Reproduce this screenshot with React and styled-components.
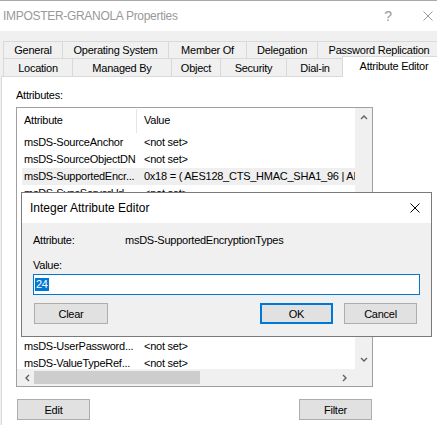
import React from "react"
import styled, { createGlobalStyle } from "styled-components"

const Global = createGlobalStyle`
  * { box-sizing: border-box; }
  body {
    margin: 0;
    font-family: "Liberation Sans", Arial, sans-serif;
    font-size: 11px;
    letter-spacing: -0.25px;
    color: #000;
    background: #fff;
  }
`

const topTabs = [
  { label: "General", width: 60 },
  { label: "Operating System", width: 107 },
  { label: "Member Of", width: 79 },
  { label: "Delegation", width: 72 },
  { label: "Password Replication", width: 124 },
]

const bottomTabs = [
  { label: "Location", width: 70 },
  { label: "Managed By", width: 100 },
  { label: "Object", width: 50 },
  { label: "Security", width: 67 },
  { label: "Dial-in", width: 58 },
  { label: "Attribute Editor", width: 104, active: true },
]

const rows = [
  ["msDS-SourceAnchor", "<not set>"],
  ["msDS-SourceObjectDN", "<not set>"],
  ["msDS-SupportedEncr...", "0x18 = ( AES128_CTS_HMAC_SHA1_96 | AES256_CTS_HMAC_SHA1_96 )", true],
  ["msDS-SyncServerUrl", "<not set>"],
  ["msDS-TasksForAzRole", "<not set>"],
  ["msDS-TDOEgressBL", "<not set>"],
  ["msDS-TDOIngressBL", "<not set>"],
  ["msDS-TopQuotaUsage", "<not set>"],
  ["msDS-UpdateScript", "<not set>"],
  ["msDS-User-Account...", "0x1000 = ( WORKSTATION_TRUST_ACCOUNT )"],
  ["msDS-UserPasswordE...", "<not set>"],
  ["msDS-UserAccountDi...", "<not set>"],
  ["msDS-UserPassword...", "<not set>"],
  ["msDS-ValueTypeRef...", "<not set>"],
]

const Window = styled.div`
  position: relative;
  width: 437px;
  height: 425px;
  overflow: hidden;
  background: #f0f0f0;
  display: flex;
  flex-direction: column;
`

const TitleBar = styled.div`
  height: 31px;
  flex: none;
  background: #fff;
  border-top: 1px solid #aaa;
  display: flex;
  align-items: center;
  padding-left: 3px;
  color: #999;
  font-size: 12px;
  letter-spacing: -0.3px;
`

const TitleText = styled.div`
  flex: 1;
`

const CaptionButtons = styled.div`
  display: flex;
  margin-right: -8px;
`

const CaptionButton = styled.div`
  width: ${p => p.$w}px;
  height: 30px;
  display: flex;
  align-items: center;
  justify-content: center;
  font-size: 14px;
  color: #999;
`

const TabStrip = styled.div`
  padding: 10px 0 0 3px;
  flex: none;
`

const TabRow = styled.div`
  display: flex;
  align-items: flex-end;
  height: ${p => p.$h}px;
`

const Tab = styled.div`
  flex: none;
  width: ${p => p.$w}px;
  height: ${p => (p.$active ? p.$h + 3 : p.$h)}px;
  margin-left: ${p => (p.$active ? -2 : -1)}px;
  margin-bottom: ${p => (p.$active ? -1 : 0)}px;
  border: 1px solid #d9d9d9;
  border-bottom: none;
  background: ${p => (p.$active ? "#fff" : "#f0f0f0")};
  display: flex;
  justify-content: center;
  align-items: ${p => (p.$active ? "flex-start" : "center")};
  padding-top: ${p => (p.$active ? 3 : 0)}px;
  position: relative;
  z-index: ${p => (p.$active ? 1 : 0)};
  white-space: nowrap;
  &:first-child { margin-left: 0; }
`

const Panel = styled.div`
  flex: 1;
  margin-left: 1px;
  background: #fff;
  border-top: 1px solid #d9d9d9;
  border-left: 1px solid #d9d9d9;
  padding: 11px 0 0 14px;
`

const FieldLabel = styled.div`
  height: 14px;
  line-height: 14px;
  margin-bottom: 5px;
`

const ListBox = styled.div`
  width: 357px;
  height: 280px;
  border: 1px solid #a0a0a0;
  display: grid;
  grid-template-columns: minmax(0, 1fr) 17px;
  grid-template-rows: minmax(0, 1fr) 17px;
  overflow: hidden;
`

const ListMain = styled.div`
  overflow: hidden;
  min-height: 0;
  display: flex;
  flex-direction: column;
`

const HeaderRow = styled.div`
  height: 26px;
  flex: none;
  display: flex;
  align-items: center;
`

const HeaderCell = styled.div`
  width: ${p => (p.$w ? `${p.$w}px` : "auto")};
  height: 24px;
  line-height: 23px;
  padding-left: 7px;
  border-right: ${p => (p.$sep ? "1px solid #e5e5e5" : "none")};
`

const Body = styled.div`
  flex: 1;
  min-height: 0;
  overflow: hidden;
`

const Row = styled.div`
  height: 17px;
  display: flex;
  align-items: center;
  margin-left: 5px;
  padding-bottom: 1px;
  background: ${p => (p.$sel ? "#efefef" : "transparent")};
  white-space: nowrap;
`

const Cell = styled.div`
  flex: none;
  width: ${p => (p.$w ? `${p.$w}px` : "auto")};
  padding-left: 2px;
  overflow: hidden;
`

const VScroll = styled.div`
  background: #f0f0f0;
  display: flex;
  flex-direction: column;
  justify-content: space-between;
  align-items: center;
  padding: 6px 0 5px;
`

const HScroll = styled.div`
  background: #f0f0f0;
  display: flex;
  align-items: center;
  padding-left: 7px;
`

const Thumb = styled.div`
  width: 166px;
  height: 13px;
  margin-left: 2px;
  background: #cdcdcd;
`

const Corner = styled.div`
  background: #f0f0f0;
`

const ButtonRow = styled.div`
  width: 357px;
  display: flex;
  justify-content: space-between;
  padding: 0 1px;
  margin-top: 12px;
`

const Button = styled.div`
  width: ${p => p.$w || 73}px;
  height: 21px;
  display: flex;
  align-items: center;
  justify-content: center;
  background: #e1e1e1;
  border: ${p => (p.$default ? "2px solid #0078d7" : "1px solid #adadad")};
`

const Dialog = styled.div`
  position: absolute;
  left: 21px;
  top: 192px;
  width: 411px;
  height: 145px;
  border: 1px solid #7a7a7a;
  background: #f0f0f0;
  display: flex;
  flex-direction: column;
  z-index: 5;
`

const DialogTitle = styled.div`
  height: 30px;
  background: #fff;
  display: flex;
  align-items: center;
  justify-content: space-between;
  padding: 0 11px 0 8px;
  font-size: 12px;
  letter-spacing: 0;
`

const DialogBody = styled.div`
  padding: 11px 11px 0 11px;
`

const InfoRow = styled.div`
  display: flex;
  height: 13px;
  line-height: 13px;
  margin-bottom: 11px;
`

const InfoLabel = styled.div`
  width: 92px;
`

const ValueLabel = styled.div`
  height: 14px;
  line-height: 14px;
  margin-bottom: 2px;
`

const Input = styled.div`
  width: 387px;
  height: 21px;
  background: #fff;
  border: 1px solid #0078d7;
  display: flex;
  align-items: center;
  padding-left: 1px;
`

const Selected = styled.span`
  background: #0078d7;
  color: #fff;
  padding: 0 1px;
  line-height: 13px;
`

const DialogButtons = styled.div`
  display: flex;
  margin-top: 8px;
  padding: 0 3px 0 1px;
  gap: 11px;
`

const Spacer = styled.div`
  flex: 1;
`

const ArrowGap = styled.div`
  width: 6px;
`

const Chevron = ({ dir }) => {
  const pts = {
    up: "1,5 4,2 7,5",
    down: "1,2 4,5 7,2",
    left: "5,1 2,4 5,7",
    right: "2,1 5,4 2,7",
  }[dir]
  return (
    <svg width="8" height="8" viewBox="0 0 8 8">
      <polyline points={pts} fill="none" stroke="#606060" strokeWidth="1.4" />
    </svg>
  )
}

const CloseIcon = ({ size, color }) => (
  <svg width={size} height={size} viewBox="0 0 10 10">
    <path d="M0.5 0.5 L9.5 9.5 M9.5 0.5 L0.5 9.5" stroke={color} strokeWidth="1" />
  </svg>
)

export default function App() {
  return (
    <>
      <Global />
      <Window>
        <TitleBar>
          <TitleText>IMPOSTER-GRANOLA Properties</TitleText>
          <CaptionButtons>
            <CaptionButton $w={46}>?</CaptionButton>
            <CaptionButton $w={34}>
              <CloseIcon size={10} color="#999" />
            </CaptionButton>
          </CaptionButtons>
        </TitleBar>

        <TabStrip>
          <TabRow $h={17}>
            {topTabs.map(t => (
              <Tab key={t.label} $w={t.width} $h={17}>{t.label}</Tab>
            ))}
          </TabRow>
          <TabRow $h={18}>
            {bottomTabs.map(t => (
              <Tab key={t.label} $w={t.width} $h={18} $active={t.active}>{t.label}</Tab>
            ))}
          </TabRow>
        </TabStrip>

        <Panel>
          <FieldLabel>Attributes:</FieldLabel>
          <ListBox>
            <ListMain>
              <HeaderRow>
                <HeaderCell $w={120} $sep>Attribute</HeaderCell>
                <HeaderCell>Value</HeaderCell>
              </HeaderRow>
              <Body>
                {rows.map(([name, value, sel]) => (
                  <Row key={name} $sel={sel}>
                    <Cell $w={120}>{name}</Cell>
                    <Cell>{value}</Cell>
                  </Row>
                ))}
              </Body>
            </ListMain>
            <VScroll>
              <Chevron dir="up" />
              <Chevron dir="down" />
            </VScroll>
            <HScroll>
              <Chevron dir="left" />
              <Thumb />
              <Spacer />
              <Chevron dir="right" />
              <ArrowGap />
            </HScroll>
            <Corner />
          </ListBox>
          <ButtonRow>
            <Button>Edit</Button>
            <Button>Filter</Button>
          </ButtonRow>
        </Panel>

        <Dialog>
          <DialogTitle>
            <span>Integer Attribute Editor</span>
            <CloseIcon size={10} color="#000" />
          </DialogTitle>
          <DialogBody>
            <InfoRow>
              <InfoLabel>Attribute:</InfoLabel>
              <div>msDS-SupportedEncryptionTypes</div>
            </InfoRow>
            <ValueLabel>Value:</ValueLabel>
            <Input>
              <Selected>24</Selected>
            </Input>
            <DialogButtons>
              <Button $w={74}>Clear</Button>
              <Spacer />
              <Button $default>OK</Button>
              <Button>Cancel</Button>
            </DialogButtons>
          </DialogBody>
        </Dialog>
      </Window>
    </>
  )
}
